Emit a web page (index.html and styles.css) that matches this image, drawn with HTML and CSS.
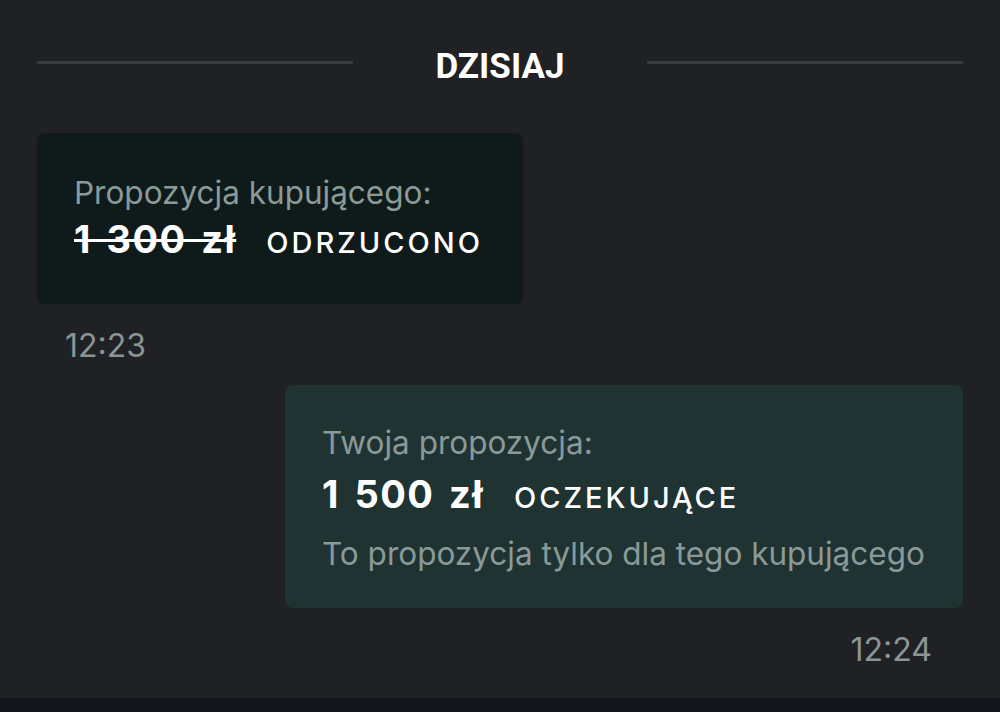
FILE: index.html
```html
<!DOCTYPE html>
<html lang="pl">
<head>
  <meta charset="UTF-8" />
  <title>Czat - propozycje</title>
  <link rel="stylesheet" href="styles.css">
</head>
<body>
  <div class="chat">
    <div class="day">
      <span class="day-line"></span>
      <span class="day-label">DZISIAJ</span>
      <span class="day-line"></span>
    </div>

    <div class="msg incoming">
      <div class="bubble dark">
        <div class="label">Propozycja kupującego:</div>
        <div class="offer">
          <span class="price crossed">1 300 zł</span>
          <span class="status">ODRZUCONO</span>
        </div>
      </div>
      <div class="time">12:23</div>
    </div>

    <div class="msg outgoing">
      <div class="bubble teal">
        <div class="label">Twoja propozycja:</div>
        <div class="offer">
          <span class="price">1 500 zł</span>
          <span class="status">OCZEKUJĄCE</span>
        </div>
        <div class="note">To propozycja tylko dla tego kupującego</div>
      </div>
      <div class="time">12:24</div>
    </div>
  </div>
  <div class="bottom-bar"></div>
</body>
</html>
```

FILE: styles.css
```css
body {
  margin: 0;
  background: #202125;
  font-family: 'Inter', 'Roboto', sans-serif;
  color: #fff;
  height: 712px;
  display: flex;
  flex-direction: column;
  overflow: hidden;
}

.chat {
  flex: 1;
  padding: 0 37px;
}

.day {
  display: flex;
  align-items: flex-start;
  height: 58px;
  margin-top: 34px;
}

.day-line {
  flex: 1;
  height: 3px;
  background: #3a3b40;
  margin-top: 27px;
}

.day-label {
  width: 294px;
  text-align: center;
  font-family: 'Roboto', sans-serif;
  font-weight: 700;
  font-size: 35px;
  line-height: 58px;
  margin-top: 4px;
}

.msg {
  display: flex;
  flex-direction: column;
}

.incoming {
  margin-top: 41px;
  align-items: flex-start;
}

.outgoing {
  margin-top: 19px;
  align-items: flex-end;
}

.bubble {
  border-radius: 8px;
  box-sizing: border-box;
}

.dark {
  background: #0f1a1a;
  width: 486px;
  padding: 40px 30px 35px 37px;
}

.teal {
  background: #1f3333;
  width: 678px;
  padding: 38px 30px 34px 37px;
}

.label,
.note {
  font-size: 31.5px;
  line-height: 40px;
  color: #8a9a98;
  white-space: nowrap;
}

.offer {
  display: flex;
  align-items: baseline;
  line-height: 52px;
  white-space: nowrap;
}

.teal .offer {
  margin-top: 5px;
}

.price {
  font-weight: 700;
  font-size: 38px;
  letter-spacing: 1.5px;
  word-spacing: 4px;
  margin-right: 30px;
}

.crossed {
  text-decoration: line-through;
  text-decoration-thickness: 3px;
}

.status {
  font-size: 29px;
  font-weight: 500;
  letter-spacing: 3px;
}

.teal .note {
  margin-top: 10px;
}

.time {
  font-size: 32px;
  color: #8a9595;
  line-height: 40px;
  margin-top: 22px;
  padding: 0 31px 0 28px;
}

.bottom-bar {
  height: 14px;
  background: #12151c;
}
```
